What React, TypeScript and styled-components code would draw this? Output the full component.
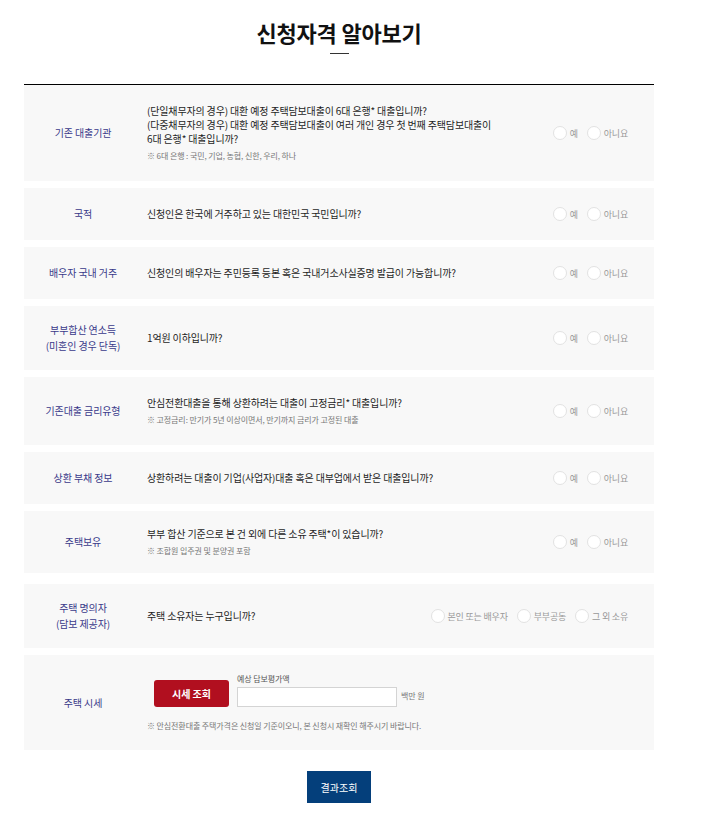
import React from 'react';
import styled, { createGlobalStyle } from 'styled-components';

const GlobalStyle = createGlobalStyle`
	html, body {
		margin: 0;
		padding: 0;
		background: #fff;
	}
	body {
		font-family: 'Noto Sans CJK KR', 'Noto Sans', sans-serif;
		color: #222;
	}
`;

const Page = styled.div`
	width: 630px;
	margin-left: 24px;
	padding-top: 18px;
	padding-bottom: 19px;
`;

const TitleWrap = styled.div`
	display: flex;
	flex-direction: column;
	align-items: center;
	margin-bottom: 30px;
`;

const Title = styled.h2`
	margin: 0;
	font-size: 22px;
	line-height: 28px;
	font-weight: 700;
	letter-spacing: -0.2px;
	color: #111;
`;

const TitleBar = styled.span`
	display: block;
	width: 19px;
	height: 1px;
	margin-top: 7px;
	background: #333;
`;

const List = styled.div`
	border-top: 1px solid #000;
	display: flex;
	flex-direction: column;
	gap: 7px;
`;

const Row = styled.div<{ $pad?: number; $gap?: number }>`
	display: flex;
	align-items: center;
	background: #f8f8f8;
	padding: ${(p) => p.$pad ?? 18}px 0;
	margin-top: ${(p) => p.$gap ?? 0}px;
`;

const Label = styled.div`
	width: 118px;
	flex-shrink: 0;
	text-align: center;
	font-size: 10px;
	line-height: 16px;
	letter-spacing: -0.1px;
	color: #3a3a8a;
`;

const Question = styled.div`
	flex: 1;
	margin-left: 5px;
	display: flex;
	flex-direction: column;
`;

const QText = styled.div`
	font-size: 10px;
	line-height: 14px;
	letter-spacing: -0.15px;
	color: #1e1e1e;
	white-space: nowrap;
`;

const Note = styled.div<{ $top?: number }>`
	margin-top: ${(p) => p.$top ?? 4}px;
	font-size: 8px;
	line-height: 12px;
	letter-spacing: -0.1px;
	color: #777;
	white-space: nowrap;
`;

const Options = styled.div`
	display: flex;
	align-items: center;
	gap: 9px;
	padding-right: 26px;
	flex-shrink: 0;
`;

const Option = styled.label`
	display: flex;
	align-items: center;
	gap: 3px;
	font-size: 9px;
	letter-spacing: -0.2px;
	color: #999;
	cursor: pointer;
`;

const Circle = styled.span`
	display: inline-block;
	width: 12px;
	height: 12px;
	border-radius: 50%;
	border: 1px solid #e2e2e2;
	background: #fff;
`;

const PriceLine = styled.div`
	display: flex;
	align-items: flex-end;
	margin-left: 7px;
`;

const RedButton = styled.button`
	width: 75px;
	height: 27px;
	margin-right: 8px;
	border: none;
	border-radius: 3px;
	background: #b10f1f;
	color: #fff;
	font-family: inherit;
	font-size: 10px;
	font-weight: 700;
	letter-spacing: 0;
	cursor: pointer;
`;

const Field = styled.div`
	display: flex;
	flex-direction: column;
`;

const FieldLabel = styled.span`
	font-size: 8px;
	line-height: 12px;
	letter-spacing: -0.1px;
	color: #555;
	margin-bottom: 2px;
`;

const Input = styled.input`
	width: 160px;
	height: 20px;
	box-sizing: border-box;
	border: 1px solid #d4d4d4;
	background: #fff;
	padding: 0 4px;
`;

const Unit = styled.span`
	margin-left: 4px;
	margin-bottom: 6px;
	font-size: 8px;
	letter-spacing: -0.1px;
	color: #777;
`;

const Footer = styled.div`
	display: flex;
	justify-content: center;
	margin-top: 21px;
`;

const BlueButton = styled.button`
	width: 64px;
	height: 32px;
	border: none;
	background: #043f7b;
	color: #fff;
	font-family: inherit;
	font-size: 10px;
	letter-spacing: 0;
	cursor: pointer;
`;

const YesNo = () => (
	<Options>
		<Option>
			<Circle />
			예
		</Option>
		<Option>
			<Circle />
			아니요
		</Option>
	</Options>
);

const App = () => {
	return (
		<>
			<GlobalStyle />
			<Page>
				<TitleWrap>
					<Title>신청자격 알아보기</Title>
					<TitleBar />
				</TitleWrap>
				<List>
					<Row $pad={19}>
						<Label>기존 대출기관</Label>
						<Question>
							<QText>(단일채무자의 경우) 대환 예정 주택담보대출이 6대 은행* 대출입니까?</QText>
							<QText>(다중채무자의 경우) 대환 예정 주택담보대출이 여러 개인 경우 첫 번째 주택담보대출이</QText>
							<QText>6대 은행* 대출입니까?</QText>
							<Note>※ 6대 은행 : 국민, 기업, 농협, 신한, 우리, 하나</Note>
						</Question>
						<YesNo />
					</Row>
					<Row>
						<Label>국적</Label>
						<Question>
							<QText>신청인은 한국에 거주하고 있는 대한민국 국민입니까?</QText>
						</Question>
						<YesNo />
					</Row>
					<Row>
						<Label>배우자 국내 거주</Label>
						<Question>
							<QText>신청인의 배우자는 주민등록 등본 혹은 국내거소사실증명 발급이 가능합니까?</QText>
						</Question>
						<YesNo />
					</Row>
					<Row $pad={16}>
						<Label>
							부부합산 연소득
							<br />
							(미혼인 경우 단독)
						</Label>
						<Question>
							<QText>1억원 이하입니까?</QText>
						</Question>
						<YesNo />
					</Row>
					<Row $pad={19}>
						<Label>기존대출 금리유형</Label>
						<Question>
							<QText>안심전환대출을 통해 상환하려는 대출이 고정금리* 대출입니까?</QText>
							<Note>※ 고정금리: 만기가 5년 이상이면서, 만기까지 금리가 고정된 대출</Note>
						</Question>
						<YesNo />
					</Row>
					<Row>
						<Label>상환 부채 정보</Label>
						<Question>
							<QText>상환하려는 대출이 기업(사업자)대출 혹은 대부업에서 받은 대출입니까?</QText>
						</Question>
						<YesNo />
					</Row>
					<Row $pad={16}>
						<Label>주택보유</Label>
						<Question>
							<QText>부부 합산 기준으로 본 건 외에 다른 소유 주택*이 있습니까?</QText>
							<Note>※ 조합원 입주권 및 분양권 포함</Note>
						</Question>
						<YesNo />
					</Row>
					<Row $pad={16} $gap={4}>
						<Label>
							주택 명의자
							<br />
							(담보 제공자)
						</Label>
						<Question>
							<QText>주택 소유자는 누구입니까?</QText>
						</Question>
						<Options>
							<Option>
								<Circle />
								본인 또는 배우자
							</Option>
							<Option>
								<Circle />
								부부공동
							</Option>
							<Option>
								<Circle />
								그 외 소유
							</Option>
						</Options>
					</Row>
					<Row>
						<Label>주택 시세</Label>
						<Question>
							<PriceLine>
								<RedButton>시세 조회</RedButton>
								<Field>
									<FieldLabel>예상 담보평가액</FieldLabel>
									<Input type="text" />
								</Field>
								<Unit>백만 원</Unit>
							</PriceLine>
							<Note $top={13}>※ 안심전환대출 주택가격은 신청일 기준이오니, 본 신청시 재확인 해주시기 바랍니다.</Note>
						</Question>
					</Row>
				</List>
				<Footer>
					<BlueButton>결과조회</BlueButton>
				</Footer>
			</Page>
		</>
	);
};

export default App;
